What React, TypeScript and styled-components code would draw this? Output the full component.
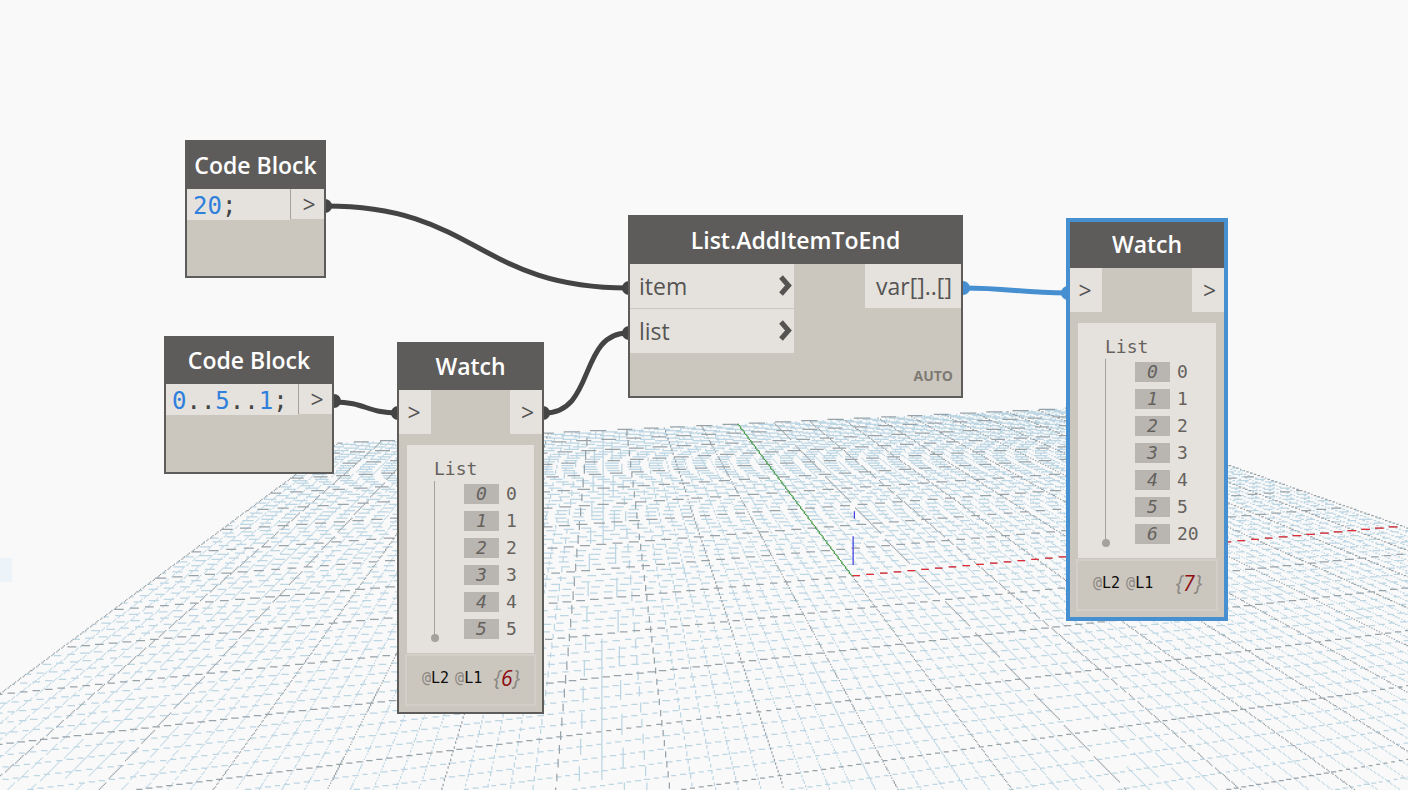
import React from "react";
import styled, { createGlobalStyle } from "styled-components";

const GlobalStyle = createGlobalStyle`
  *, *::before, *::after { box-sizing: border-box; }
  body { margin: 0; background: #f9f9f9; }
`;

const sans = `"Open Sans", "Noto Sans", sans-serif`;
const mono = `"DejaVu Sans Mono", "Liberation Mono", monospace`;

const Workspace = styled.main`
  position: relative;
  width: 100%;
  min-height: 100vh;
  overflow: hidden;
  background: #f9f9f9;
  font-family: ${sans};
  color: #555453;
`;

const Layer = styled.svg`
  position: absolute;
  top: 0;
  left: 0;
  width: 100%;
  height: 100%;
`;

const NodeCard = styled.section<{ $x: number; $y: number; $w: number; $selected?: boolean }>`
  position: absolute;
  left: ${(p) => p.$x}px;
  top: ${(p) => p.$y}px;
  width: ${(p) => p.$w}px;
  min-height: 138px;
  display: flex;
  flex-direction: column;
  background: #cbc6be;
  border: ${(p) => (p.$selected ? "4px solid #468fd0" : "2px solid #5e5c5a")};
`;

const NodeTitle = styled.h2<{ $h?: number }>`
  margin: 0;
  height: ${(p) => p.$h ?? 46}px;
  padding-bottom: 2px;
  display: flex;
  align-items: center;
  justify-content: center;
  background: #5e5c5a;
  color: #fff;
  font-size: 23px;
  line-height: 32px;
  font-weight: 600;
  white-space: nowrap;
`;

const CodeRow = styled.div`
  display: flex;
  align-items: flex-start;
`;

const Code = styled.code`
  flex: 1;
  height: 31px;
  padding-left: 6px;
  background: #e5e2dd;
  font-family: ${mono};
  font-size: 24px;
  line-height: 34px;
  color: #444;
  white-space: pre;
`;

const Num = styled.span`
  color: #2f80dc;
`;

const PortButton = styled.button<{ $w: number; $h: number; $out?: boolean; $divided?: boolean }>`
  width: ${(p) => p.$w}px;
  height: ${(p) => p.$h}px;
  padding: ${(p) => (p.$out ? "0 0 0 3px" : "0 2px 0 0")};
  border: 0;
  border-left: ${(p) => (p.$divided ? "1px solid #a5a29d" : "0")};
  background: #e5e2dd;
  color: #555453;
  font-family: ${sans};
  font-size: 23px;
  line-height: 28px;
`;

const Ports = styled.div`
  display: flex;
  justify-content: space-between;
  align-items: flex-start;
`;

const Inputs = styled.div`
  width: 164px;
  display: flex;
  flex-direction: column;
  gap: 1px;
`;

const LabelPort = styled.button`
  height: 44px;
  display: flex;
  align-items: center;
  justify-content: space-between;
  padding: 0 2px 0 9px;
  border: 0;
  background: #e5e2dd;
  color: #555453;
  font-family: ${sans};
  font-size: 23px;
  line-height: 32px;
  white-space: nowrap;
`;

const OutPort = styled(LabelPort)`
  width: 96px;
  justify-content: center;
  padding: 0 0 0 2px;
`;

const Lacing = styled.div`
  padding: 13px 8px 11px;
  text-align: right;
  font-size: 14px;
  line-height: 19px;
  font-weight: 700;
  color: #7d7a74;
`;

const Panel = styled.div`
  margin: 11px 8px 0;
  padding: 12px 0 14px 27px;
  background: #e5e2dd;
  font-family: ${mono};
  font-size: 18px;
  line-height: 24px;
  color: #65625e;
`;

const Branch = styled.div`
  position: relative;
  padding: 3px 0 0 29px;
  border-left: 1px solid #a5a29d;

  &::after {
    content: "";
    position: absolute;
    left: -4px;
    bottom: -3px;
    width: 8px;
    height: 8px;
    border-radius: 50%;
    background: #a5a29d;
  }
`;

const Items = styled.ol`
  margin: 0;
  padding: 0;
  list-style: none;
  display: flex;
  flex-direction: column;
  gap: 7px;
`;

const Item = styled.li`
  display: flex;
  gap: 7px;
  height: 20px;
  line-height: 20px;
`;

const Index = styled.i`
  width: 35px;
  background: #b9b6b1;
  text-align: center;
`;

const Footer = styled.footer`
  margin: 1px 6px 6px;
  height: 52px;
  padding: 0 14px 4px 15px;
  border: 2px solid #d3cfc8;
  display: flex;
  align-items: center;
  justify-content: space-between;
`;

const Levels = styled.div`
  display: flex;
  gap: 6px;
  font-family: ${mono};
  font-size: 15px;
  line-height: 20px;
  color: #0c0c0c;
`;

const Muted = styled.span`
  color: #8a8782;
`;

const Count = styled.i`
  font-size: 21px;
  line-height: 28px;
  color: #8a8782;
`;

const CountValue = styled.span`
  color: #8e0e12;
`;

/* The ground plane is rasterised without smoothing on its own coarse cells. */
const CELL = 1.25;
const COLS = 2048;
const ROWS = 1280;

type Point = [number, number];

/* u and v run from -1 to 1 across the grid; the result is in cells. */
const project = (u: number, v: number): Point => {
  const w = (1 + 0.179 * u + 0.853 * v) * CELL;
  return [(852 + 801 * u + 515.5 * v) / w, (576 + 44.2 * u + 209.7 * v) / w];
};

/* Walks a line thinner than a cell and keeps only the cells whose centre it covers. */
const rasterise = (from: Point, to: Point, width: number) => {
  const a = project(...from);
  const b = project(...to);
  const dx = b[0] - a[0];
  const dy = b[1] - a[1];
  const steep = Math.abs(dy) > Math.abs(dx);
  const m = steep ? 1 : 0;
  const n = 1 - m;
  const [p, q] = a[m] < b[m] ? [a, b] : [b, a];
  const slope = (q[n] - p[n]) / (q[m] - p[m]);
  const half = (width / 2) * Math.hypot(1, slope);
  const start = Math.max(0, Math.ceil(p[m] - 0.5));
  const end = Math.min(steep ? ROWS : COLS, Math.floor(q[m] - 0.5));
  let out = "";
  let runStart = -1;
  let runRow = 0;
  const flush = (stop: number) => {
    if (runStart < 0) return;
    const length = stop - runStart;
    out += steep
      ? `M${runRow} ${runStart}h1v${length}h-1z`
      : `M${runStart} ${runRow}h${length}v1h-${length}z`;
    runStart = -1;
  };
  for (let i = start; i <= end; i++) {
    const c = p[n] + (i + 0.5 - p[m]) * slope;
    const row = Math.floor(c);
    const hit = row >= 0 && row < (steep ? COLS : ROWS) && Math.abs(c - row - 0.5) <= half;
    if (!hit || row !== runRow) flush(i);
    if (hit && runStart < 0) {
      runStart = i;
      runRow = row;
    }
  }
  flush(end + 1);
  return out;
};

const NEAR = -0.75;
const DIVISIONS = 50;
const LINE = 0.6;

const gridPath = (major: boolean) => {
  const parts: string[] = [];
  for (let i = -DIVISIONS; i <= DIVISIONS; i++) {
    if ((i % 5 === 0) !== major) continue;
    const k = i / DIVISIONS;
    parts.push(rasterise([k, NEAR], [k, 1], LINE));
    if (k >= NEAR) parts.push(rasterise([-1, k], [1, k], LINE));
  }
  return parts.join("");
};

const minorGrid = gridPath(false);
const majorGrid = gridPath(true);
const xAxis = rasterise([0, 0], [1, 0], LINE);
const yAxis = rasterise([0, 0], [0, 1], 0.8);

const Ground = () => (
  <Layer aria-hidden="true">
    <rect x="0" y="558" width="12" height="24" fill="#ecf3f9" />
    <g transform={`scale(${CELL})`}>
      <path d={minorGrid} fill="#bdd6e3" />
      <path d={majorGrid} fill="#98a3a9" />
      <path d={xAxis} fill="#e32a36" />
      <path d={yAxis} fill="#3c9a3c" />
      <path d="M682 429h1v23h-1zM683 409h1v6h-1z" fill="#4240e4" />
    </g>
  </Layer>
);

const Wires = () => (
  <Layer aria-hidden="true" fill="none" strokeWidth="5">
    <g stroke="#444">
      <path d="M326 206C477 206 477 288 628 288" />
      <path d="M334 402C366 402 366 413 398 413" />
      <path d="M544 413C596 413 578 333 628 333" />
    </g>
    <path d="M963 288C1010 288 1020 293 1067 293" stroke="#468fd0" />
    <g fill="#444">
      <circle cx="325" cy="206" r="7" />
      <circle cx="629" cy="288" r="7" />
      <circle cx="334" cy="401" r="7" />
      <circle cx="398" cy="413" r="7" />
      <circle cx="543" cy="413" r="7" />
      <circle cx="629" cy="333" r="7" />
    </g>
    <g fill="#468fd0">
      <circle cx="963" cy="288" r="7" />
      <circle cx="1068" cy="293" r="7" />
    </g>
  </Layer>
);

const Chevron = () => (
  <svg width="13" height="22" viewBox="0 0 13 22" fill="none" aria-hidden="true">
    <path d="M2 2L9.5 10.5L2 19" stroke="#555453" strokeWidth="5" />
  </svg>
);

const CodeBlock = ({
  x,
  y,
  w,
  title,
  children,
}: {
  x: number;
  y: number;
  w: number;
  title?: number;
  children: React.ReactNode;
}) => (
  <NodeCard $x={x} $y={y} $w={w}>
    <NodeTitle $h={title}>Code Block</NodeTitle>
    <CodeRow>
      <Code>{children}</Code>
      <PortButton $w={34} $h={30} $out $divided aria-label="Output">&gt;</PortButton>
    </CodeRow>
  </NodeCard>
);

const Watch = ({
  x,
  y,
  w,
  values,
  selected,
}: {
  x: number;
  y: number;
  w: number;
  values: number[];
  selected?: boolean;
}) => (
  <NodeCard $x={x} $y={y} $w={w} $selected={selected}>
    <NodeTitle>Watch</NodeTitle>
    <Ports>
      <PortButton $w={32} $h={44} aria-label="Input">&gt;</PortButton>
      <PortButton $w={32} $h={44} $out aria-label="Output">&gt;</PortButton>
    </Ports>
    <Panel>
      List
      <Branch>
        <Items>
          {values.map((value, i) => (
            <Item key={i}>
              <Index>{i}</Index>
              {value}
            </Item>
          ))}
        </Items>
      </Branch>
    </Panel>
    <Footer>
      <Levels>
        <span><Muted>@</Muted>L2</span>
        <span><Muted>@</Muted>L1</span>
      </Levels>
      <Count>{"{"}<CountValue>{values.length}</CountValue>{"}"}</Count>
    </Footer>
  </NodeCard>
);

export default function App() {
  return (
    <>
      <GlobalStyle />
      <Workspace>
        <Ground />
        <Wires />
        <CodeBlock x={185} y={140} w={141} title={47}>
          <Num>20</Num>;
        </CodeBlock>
        <CodeBlock x={164} y={336} w={170}>
          <Num>0</Num>..<Num>5</Num>..<Num>1</Num>;
        </CodeBlock>
        <Watch x={397} y={342} w={147} values={[0, 1, 2, 3, 4, 5]} />
        <NodeCard $x={628} $y={215} $w={335}>
          <NodeTitle $h={47}>List.AddItemToEnd</NodeTitle>
          <Ports>
            <Inputs>
              <LabelPort>item<Chevron /></LabelPort>
              <LabelPort>list<Chevron /></LabelPort>
            </Inputs>
            <OutPort>var[]..[]</OutPort>
          </Ports>
          <Lacing>AUTO</Lacing>
        </NodeCard>
        <Watch x={1066} y={218} w={162} values={[0, 1, 2, 3, 4, 5, 20]} selected />
      </Workspace>
    </>
  );
}
